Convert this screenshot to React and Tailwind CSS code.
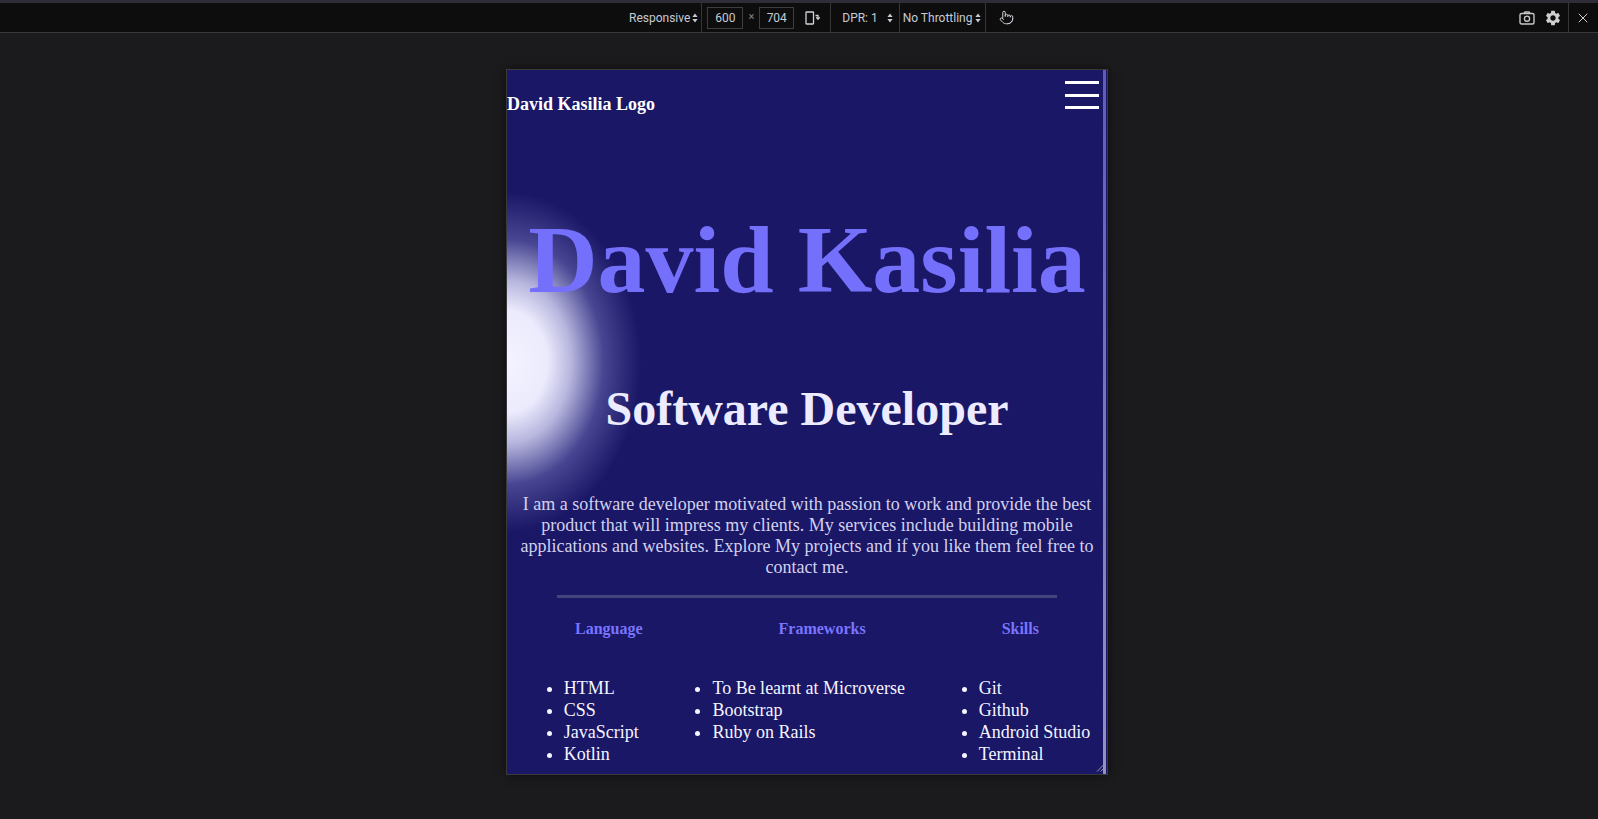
import { Pointer, X } from 'lucide-react'
import { MdSettings } from 'react-icons/md'

const languages = ['HTML', 'CSS', 'JavaScript', 'Kotlin']
const frameworks = ['To Be learnt at Microverse', 'Bootstrap', 'Ruby on Rails']
const skills = ['Git', 'Github', 'Android Studio', 'Terminal']

function Arrows() {
  return (
    <svg width="6" height="10" viewBox="0 0 6 10" className="shrink-0">
      <path d="M3 0.5 L5.6 4 H0.4 Z M3 9.5 L5.6 6 H0.4 Z" fill="#c5cbd6" />
    </svg>
  )
}

function Sep() {
  return <div className="w-px self-stretch bg-[#363636]" />
}

function RotateIcon() {
  return (
    <svg width="16" height="14" viewBox="0 0 16 14" fill="none" stroke="#cfd3da" strokeWidth="1.3">
      <rect x="1" y="1" width="7.5" height="12" rx="0.5" />
      <path d="M10.5 4.5 h2.5 v3" />
      <path d="M11.3 6.3 L13 8.2 L14.7 6.3" />
    </svg>
  )
}

function CameraIcon() {
  return (
    <svg width="16" height="14" viewBox="0 0 16 14" fill="none" stroke="#c8c8c8" strokeWidth="1.4">
      <path d="M5 2.5 L6 1 H10 L11 2.5" />
      <rect x="1" y="2.5" width="14" height="10.5" rx="1.5" />
      <circle cx="8" cy="7.7" r="2.6" />
    </svg>
  )
}

function Toolbar() {
  return (
    <div className="bg-[#0d0d0d] border-t-[3px] border-t-[#2e2e38] border-b border-b-[#383838]">
      <div className="flex items-center h-[29px] pl-[629px] pr-[7px] text-[12px] text-[#c5cbd6] font-['Roboto',sans-serif]">
        <span>Responsive</span>
        <span className="ml-[2px] flex"><Arrows /></span>
        <div className="ml-[3px] h-full flex"><Sep /></div>
        <div className="ml-[5px] w-[36px] h-[22px] border border-[#3e3e3e] flex items-center justify-center">600</div>
        <span className="ml-[5px] text-[11px] text-[#8a8a8a]">×</span>
        <div className="ml-[5px] w-[35px] h-[22px] border border-[#3e3e3e] flex items-center justify-center">704</div>
        <span className="ml-[11px] flex"><RotateIcon /></span>
        <div className="ml-[9px] h-full flex"><Sep /></div>
        <span className="ml-[11px]">DPR: 1</span>
        <span className="ml-[9px] flex"><Arrows /></span>
        <div className="ml-[6px] h-full flex"><Sep /></div>
        <span className="ml-[3px]">No Throttling</span>
        <span className="ml-[3px] flex"><Arrows /></span>
        <div className="ml-[4px] h-full flex"><Sep /></div>
        <Pointer size={15} strokeWidth={1.6} className="ml-[13px] text-[#cfd3da]" />
        <div className="ml-auto flex items-center h-full">
          <CameraIcon />
          <MdSettings size={18} className="ml-[9px] text-[#cfcfcf]" />
          <div className="ml-[6px] h-full flex"><Sep /></div>
          <X size={16} strokeWidth={1.5} className="ml-[6px] text-[#cfcfcf]" />
        </div>
      </div>
    </div>
  )
}

function List({ items }) {
  return (
    <ul className="list-disc pl-[40px] text-[18px] leading-[22px] text-[#f6f5ff]">
      {items.map((item) => (
        <li key={item}>{item}</li>
      ))}
    </ul>
  )
}

function Portfolio() {
  return (
    <div className="relative w-[600px] h-[704px] overflow-hidden bg-[#191766] ring-1 ring-[#3a3a3a] shadow-[0_0_10px_rgba(0,0,0,0.6)] font-['Liberation_Serif',serif]">
      <div className="absolute inset-0 pointer-events-none bg-[radial-gradient(ellipse_134px_170px_at_0px_292px,#f4f3ff_0%,#ecebfd_30%,rgba(210,209,242,0.85)_48%,rgba(130,128,200,0.45)_72%,rgba(25,23,102,0)_100%)]" />

      <div className="relative">
        <header className="flex justify-between items-start">
          <span className="mt-[24px] text-[18px] leading-[21px] font-bold text-white">David Kasilia Logo</span>
          <div className="mt-[11px] mr-[8px] flex flex-col gap-[9.5px]">
            <span className="block w-[34px] h-[3px] bg-white" />
            <span className="block w-[34px] h-[3px] bg-white" />
            <span className="block w-[34px] h-[3px] bg-white" />
          </div>
        </header>

        <h1 className="mt-[97px] text-center text-[96px] leading-none font-bold text-[#7570fb]">David Kasilia</h1>
        <h2 className="mt-[77px] text-center text-[48px] leading-none font-bold text-[#ecebff]">Software Developer</h2>

        <p className="mt-[61px] px-[12px] text-center text-[18px] leading-[21px] text-[#d3d1ee]">
          I am a software developer motivated with passion to work and provide the best product that will impress my
          clients. My services include building mobile applications and websites. Explore My projects and if you like
          them feel free to contact me.
        </p>

        <div className="mt-[17px] mx-auto w-[500px] h-[3px] bg-[#45437c]" />

        <div className="mt-[22px] flex justify-around text-[16px] leading-[18px] font-bold text-[#7a74ff]">
          <h3>Language</h3>
          <h3>Frameworks</h3>
          <h3>Skills</h3>
        </div>

        <div className="mt-[39px] flex justify-around">
          <List items={languages} />
          <List items={frameworks} />
          <List items={skills} />
        </div>
      </div>

      <div className="absolute top-0 right-px h-full w-[3px] opacity-70 bg-linear-to-b from-[#7e78dc] to-[#c8c7e4]" />
      <svg width="9" height="9" viewBox="0 0 9 9" className="absolute bottom-[2px] right-[2px]" stroke="#9a9ab0" strokeWidth="1">
        <path d="M8.5 1 L1 8.5 M8.5 4.5 L4.5 8.5 M8.5 7.5 L7.5 8.5" />
      </svg>
    </div>
  )
}

export default function App() {
  return (
    <div className="w-[1598px] h-[819px] bg-[#1b1b1d] overflow-hidden">
      <Toolbar />
      <div className="flex justify-center pl-[16px] pt-[37px]">
        <Portfolio />
      </div>
    </div>
  )
}
